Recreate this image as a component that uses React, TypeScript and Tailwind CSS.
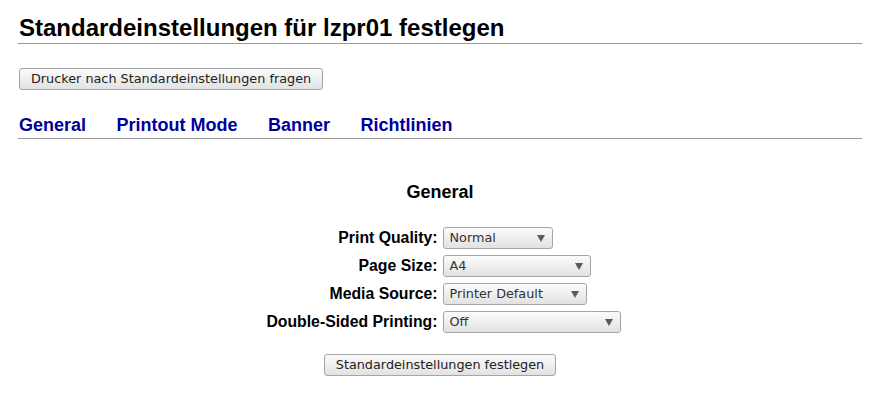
import React from "react";

const UI_FONT = "font-['DejaVu_Sans',sans-serif]";
const HEAD_FONT = "font-['Liberation_Sans',Arial,sans-serif]";

type Option = { label: string; value: string; width: string };

const OPTIONS: Option[] = [
  { label: "Print Quality:", value: "Normal", width: "w-[110px]" },
  { label: "Page Size:", value: "A4", width: "w-[148px]" },
  { label: "Media Source:", value: "Printer Default", width: "w-[144px]" },
  { label: "Double-Sided Printing:", value: "Off", width: "w-[178px]" },
];

const TABS = ["General", "Printout Mode", "Banner", "Richtlinien"];

function Button({ children }: { children: React.ReactNode }) {
  return (
    <button
      type="button"
      className={`${UI_FONT} h-[22px] rounded-[3px] border border-[#a6a6a6] bg-gradient-to-b from-[#fbfbfb] to-[#e2e2e2] px-[11px] text-[12.8px] leading-none text-[#222]`}
    >
      {children}
    </button>
  );
}

function FakeSelect({ value, width }: { value: string; width: string }) {
  return (
    <div
      className={`${UI_FONT} ${width} relative flex h-[22px] items-center rounded-[3px] border border-[#a6a6a6] bg-gradient-to-b from-[#fbfbfb] to-[#e2e2e2] pl-[6px] text-[12.8px] leading-none text-[#333]`}
    >
      {value}
      <svg
        width="8"
        height="7"
        viewBox="0 0 8 7"
        className="absolute right-[7px] top-[7px]"
      >
        <polygon points="0,0 8,0 4,7" fill="#5a5a5a" />
      </svg>
    </div>
  );
}

export default function App() {
  return (
    <div className={`${HEAD_FONT} ml-[18px] mr-[10px] bg-white text-black`}>
      <h1 className="mt-[14px] border-b border-[#9a9a9a] pb-[1px] pl-[1px] text-[24px] font-bold leading-[28px]">
        Standardeinstellungen für lzpr01 festlegen
      </h1>

      <div className="mt-[24px] flex pl-[1px]">
        <Button>Drucker nach Standardeinstellungen fragen</Button>
      </div>

      <nav className="mt-[25px] flex gap-[30.5px] border-b border-[#9a9a9a] pb-[2px] pl-[1px] text-[18px] font-bold leading-[21px] text-[#000099]">
        {TABS.map((tab) => (
          <span key={tab}>{tab}</span>
        ))}
      </nav>

      <h2 className="mt-[43px] text-center text-[18px] font-bold leading-[21px]">
        General
      </h2>

      <div className="mt-[24px] grid grid-cols-[1fr_1fr] gap-x-[5px] gap-y-[6px]">
        {OPTIONS.map((opt) => (
          <React.Fragment key={opt.label}>
            <div className="flex h-[22px] items-center justify-end text-[15.8px] font-bold leading-[22px]">
              {opt.label}
            </div>
            <FakeSelect value={opt.value} width={opt.width} />
          </React.Fragment>
        ))}
      </div>

      <div className="mt-[21px] flex justify-center">
        <Button>Standardeinstellungen festlegen</Button>
      </div>
    </div>
  );
}
